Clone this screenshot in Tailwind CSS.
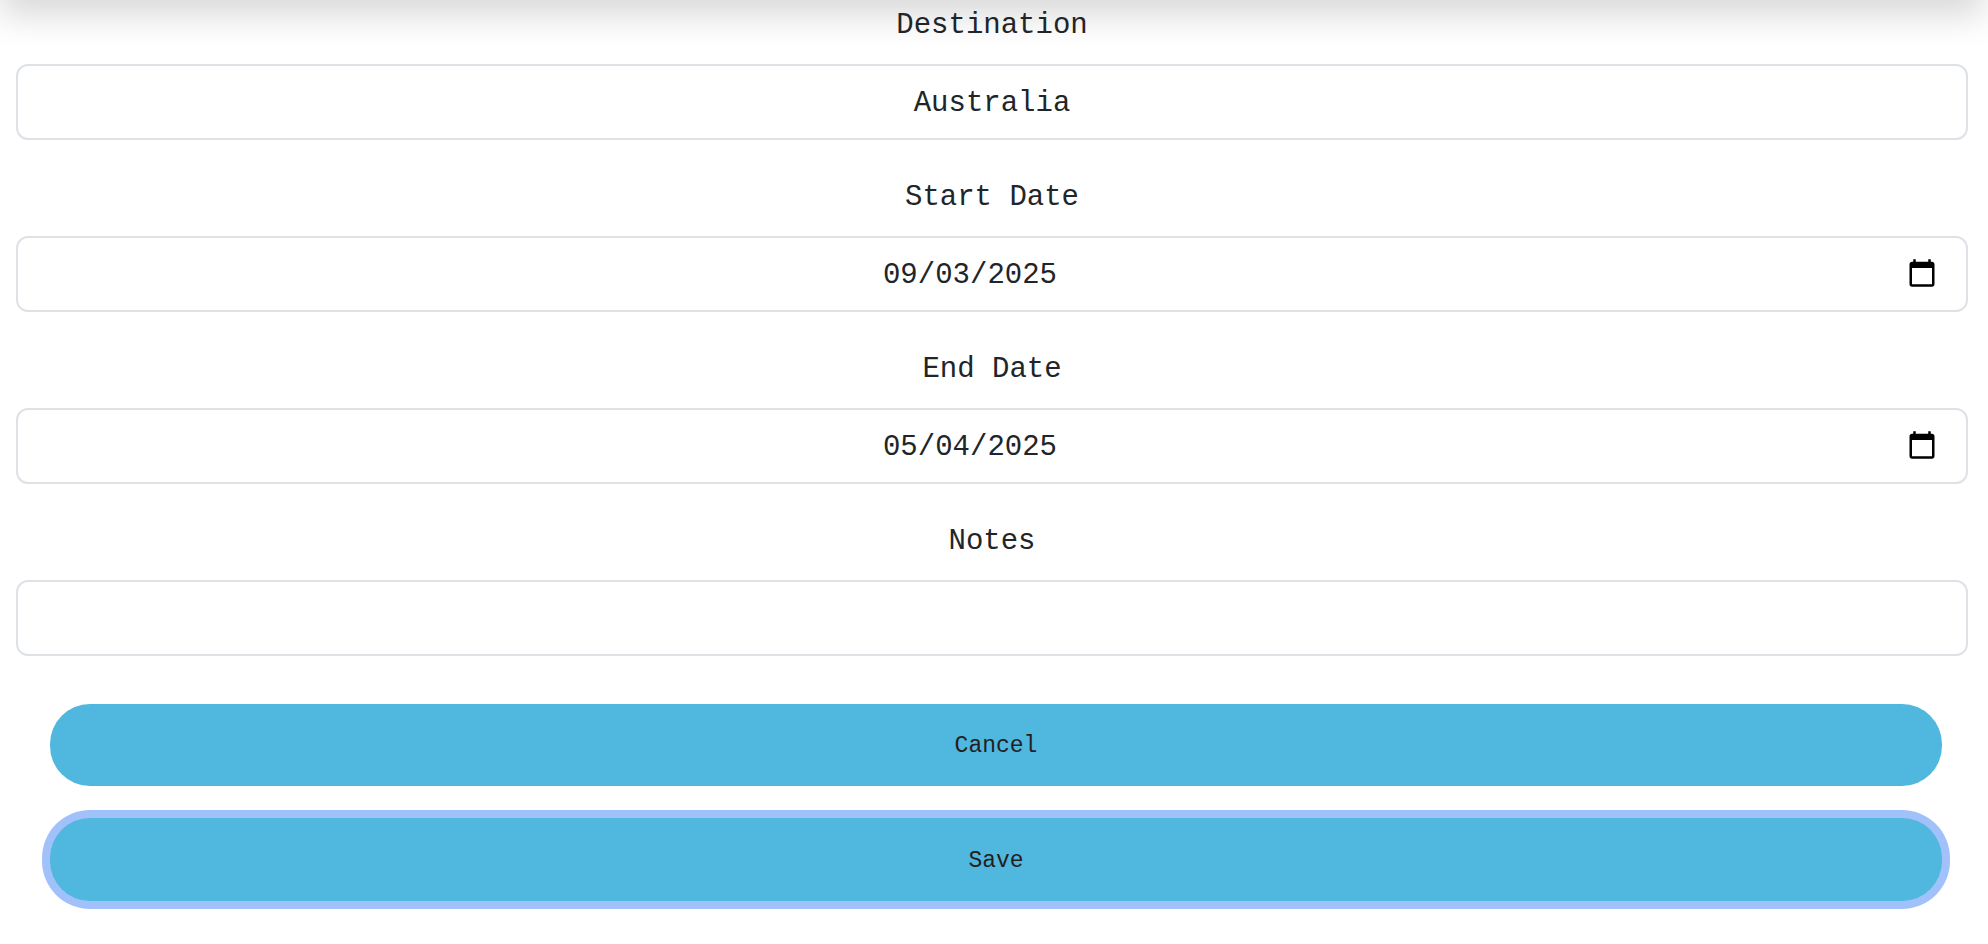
<!DOCTYPE html>
<html lang="en">
<head>
<meta charset="utf-8">
<meta name="viewport" content="width=device-width, initial-scale=1">
<title>Edit trip</title>
<script src="https://cdn.jsdelivr.net/npm/@tailwindcss/browser@4"></script>
</head>
<body class="relative overflow-x-hidden bg-white font-['Liberation_Mono',monospace] text-[29px] leading-[44px] text-[#212529]">
  <!-- Navigation bar scrolled out of view; only its shadow reaches the form -->
  <header class="absolute -top-28 left-0 right-1 h-28 bg-white shadow-[0_16px_32px_rgba(0,0,0,0.15)]"></header>

  <form class="relative flex flex-col gap-12 pl-4 pr-5">
    <div class="flex flex-col gap-8">
      <div class="flex flex-col gap-4">
        <label for="destination" class="pt-1 text-center">Destination</label>
        <input id="destination" type="text" value="Australia" class="h-[76px] w-full rounded-xl border-2 border-[#dee2e6] bg-white px-6 pt-0.5 text-center outline-none">
      </div>
      <div class="flex flex-col gap-4">
        <label for="start" class="pt-1 text-center">Start Date</label>
        <input id="start" type="date" value="2025-09-03" class="h-[76px] w-full rounded-xl border-2 border-[#dee2e6] bg-white px-6 text-center outline-none [&::-webkit-datetime-edit]:block [&::-webkit-datetime-edit]:pt-1 [&::-webkit-datetime-edit-month-field]:px-0 [&::-webkit-datetime-edit-day-field]:px-0 [&::-webkit-datetime-edit-year-field]:px-0 [&::-webkit-calendar-picker-indicator]:ml-2 [&::-webkit-calendar-picker-indicator]:mr-1 [&::-webkit-calendar-picker-indicator]:size-8 [&::-webkit-calendar-picker-indicator]:p-0">
      </div>
      <div class="flex flex-col gap-4">
        <label for="end" class="pt-1 text-center">End Date</label>
        <input id="end" type="date" value="2025-05-04" class="h-[76px] w-full rounded-xl border-2 border-[#dee2e6] bg-white px-6 text-center outline-none [&::-webkit-datetime-edit]:block [&::-webkit-datetime-edit]:pt-1 [&::-webkit-datetime-edit-month-field]:px-0 [&::-webkit-datetime-edit-day-field]:px-0 [&::-webkit-datetime-edit-year-field]:px-0 [&::-webkit-calendar-picker-indicator]:ml-2 [&::-webkit-calendar-picker-indicator]:mr-1 [&::-webkit-calendar-picker-indicator]:size-8 [&::-webkit-calendar-picker-indicator]:p-0">
      </div>
      <div class="flex flex-col gap-4">
        <label for="notes" class="pt-1 text-center">Notes</label>
        <input id="notes" type="text" class="h-[76px] w-full rounded-xl border-2 border-[#dee2e6] bg-white px-6 pt-0.5 text-center outline-none">
      </div>
    </div>
    <div class="flex flex-col gap-8 pb-10 pl-[34px] pr-[26px] text-[23px] text-[#231f20]">
      <button type="button" class="h-[82px] rounded-[40px] bg-[#50b7df] pt-0.5">Cancel</button>
      <button type="submit" class="h-[83px] rounded-[40px] bg-[#50b7df] pt-0.5 ring-8 ring-[#a1c1fb]">Save</button>
    </div>
  </form>
</body>
</html>
